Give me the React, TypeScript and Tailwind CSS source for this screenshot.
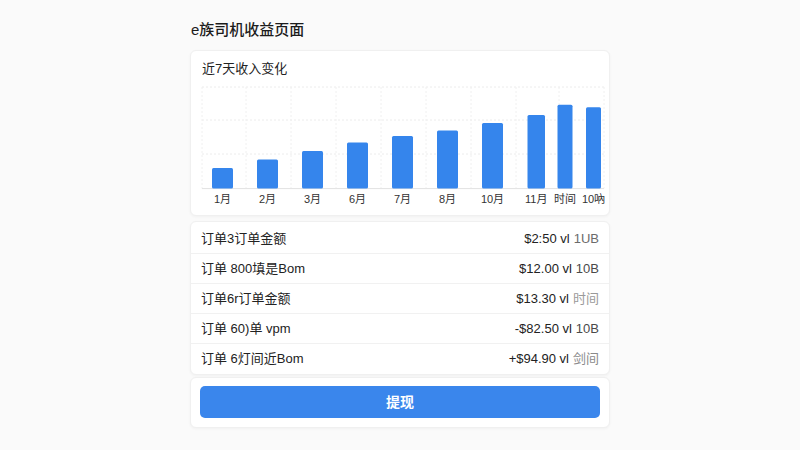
const font = { fontFamily: '"Liberation Sans", "Noto Sans CJK SC", sans-serif' };

const bars = [
  { label: "1月", x: 21, w: 21, top: 168 },
  { label: "2月", x: 66, w: 21, top: 159.5 },
  { label: "3月", x: 111, w: 21, top: 151 },
  { label: "6月", x: 156, w: 21, top: 142.5 },
  { label: "7月", x: 201, w: 21, top: 136 },
  { label: "8月", x: 246, w: 21, top: 130.5 },
  { label: "10月", x: 291, w: 21, top: 123 },
  { label: "11月", x: 336.5, w: 17.5, top: 115 },
  { label: "时间", x: 366.5, w: 15, top: 104.7 },
  { label: "10吶", x: 395, w: 15, top: 107.3 },
];

const BASE = 108.6;

const orders = [
  { name: "订单3订单金额", amount: "$2:50 vl", tag: "1UB", tagClass: "text-[#6b6b6b]" },
  { name: "订单 800填是Bom", amount: "$12.00 vl", tag: "10B", tagClass: "text-[#4a4a4a]" },
  { name: "订单6r订单金额", amount: "$13.30 vl", tag: "时间", tagClass: "text-[#9a9a9a]" },
  { name: "订单 60)单 vpm", amount: "-$82.50 vl", tag: "10B", tagClass: "text-[#4a4a4a]" },
  { name: "订单 6灯间近Bom", amount: "+$94.90 vl", tag: "剑间", tagClass: "text-[#8a8a8a]" },
];

function IncomeChart() {
  const gridY = [7, 40, 74];
  const gridX = [11, 55, 100, 145, 190, 235, 280, 325, 368, 413];
  return (
    <svg width={420} height={130} viewBox="0 0 420 130" className="block">
      {gridY.map((y) => (
        <line key={y} x1={11} x2={413} y1={y} y2={y} stroke="#ececec" strokeDasharray="2 2" />
      ))}
      {gridX.map((x) => (
        <line key={x} x1={x} x2={x} y1={7} y2={BASE} stroke="#f0f0f0" strokeDasharray="2 2" />
      ))}
      <line x1={11} x2={413} y1={BASE} y2={BASE} stroke="#e2e2e2" />
      {bars.map((b) => (
        <rect
          key={b.label}
          x={b.x}
          y={b.top - 80}
          width={b.w}
          height={BASE - (b.top - 80)}
          rx={1.5}
          fill="#3585ec"
        />
      ))}
      {bars.map((b) => (
        <text
          key={b.label + "-t"}
          x={b.x + b.w / 2}
          y={120}
          fontSize={11}
          fill="#333"
          textAnchor="middle"
          dominantBaseline="middle"
          style={font}
        >
          {b.label}
        </text>
      ))}
    </svg>
  );
}

export default function App() {
  return (
    <div className="min-h-[450px] w-full bg-[#fafafa]" style={font}>
      <div className="mx-auto w-[420px] pt-5">
        <h1 className="mb-[10px] pl-px text-[15px] leading-5 font-medium text-[#1c1c1c]">
          e族司机收益页面
        </h1>

        <div className="rounded-md border border-[#f0f0f0] bg-white pt-[9px] pb-[5px] shadow-[0_1px_3px_rgba(0,0,0,0.04)]">
          <div className="px-[11px] text-[13px] leading-[18px] text-[#222]">近7天收入变化</div>
          <div className="mt-[2px]">
            <IncomeChart />
          </div>
        </div>

        <div className="mt-[5px] rounded-md border border-[#f0f0f0] bg-white pt-[2px] shadow-[0_1px_3px_rgba(0,0,0,0.04)]">
          {orders.map((o, i) => (
            <div
              key={o.name}
              className={
                "flex h-[30px] items-center justify-between px-[10px] text-[13px] " +
                (i < orders.length - 1 ? "border-b border-[#f1f1f1]" : "")
              }
            >
              <span className="text-[#222]">{o.name}</span>
              <span className="flex gap-1">
                <span className="text-[#222]">{o.amount}</span>
                <span className={o.tagClass}>{o.tag}</span>
              </span>
            </div>
          ))}
        </div>

        <div className="mt-[2px] rounded-md border border-[#f0f0f0] bg-white px-[9px] pt-2 pb-[9px] shadow-[0_1px_3px_rgba(0,0,0,0.04)]">
          <button className="flex h-8 w-full items-center justify-center rounded-[5px] bg-[#3a86ec] text-[14px] font-semibold text-white">
            提现
          </button>
        </div>
      </div>
    </div>
  );
}
